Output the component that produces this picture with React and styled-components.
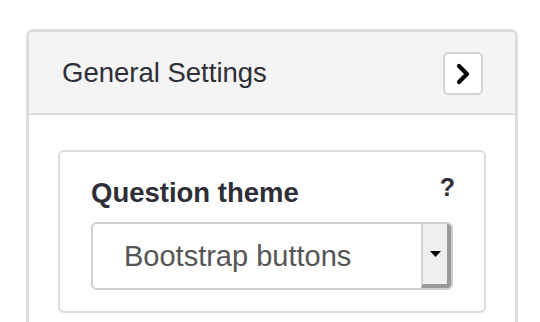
import React from "react";
import styled, { createGlobalStyle } from "styled-components";

const GlobalStyle = createGlobalStyle`
  body {
    margin: 0;
    background: #fff;
    font-family: "Liberation Sans", Arial, sans-serif;
  }
`;

const Page = styled.div`
  padding: 29px 22px 0 26px;
`;

const Panel = styled.div`
  width: 492px;
  box-sizing: border-box;
  border: 3px solid #ddd;
  border-bottom: none;
  border-radius: 7px 7px 0 0;
  overflow: hidden;
`;

const Header = styled.div`
  display: flex;
  align-items: center;
  justify-content: space-between;
  height: 81px;
  padding: 0 32px 0 33px;
  background: #f4f4f4;
  border-bottom: 2px solid #ddd;
`;

const HeaderTitle = styled.span`
  font-size: 27.5px;
  line-height: 32px;
  color: #2e2e36;
`;

const ToggleButton = styled.button`
  width: 40px;
  height: 43px;
  margin-top: 2px;
  padding: 0;
  display: flex;
  align-items: center;
  justify-content: center;
  background: #fff;
  border: 2px solid #d4d4d4;
  border-radius: 5px;
`;

const Body = styled.div`
  padding: 35px 29px 20px;
  background: #fff;
`;

const Card = styled.div`
  border: 2px solid #ddd;
  border-radius: 6px;
  padding: 25px 31px 21px;
`;

const LabelRow = styled.div`
  display: flex;
  justify-content: space-between;
  align-items: flex-start;
`;

const Label = styled.span`
  font-size: 27.5px;
  line-height: 32px;
  font-weight: 700;
  color: #2e2e36;
`;

const Help = styled.span`
  font-size: 25px;
  line-height: 32px;
  font-weight: 700;
  color: #2e2e36;
  margin-top: -6px;
  margin-right: -2px;
`;

const Select = styled.div`
  margin-top: 13px;
  width: 362px;
  height: 68px;
  box-sizing: border-box;
  display: flex;
  border: 2px solid #cfcfcf;
  border-radius: 6px;
  overflow: hidden;
`;

const SelectValue = styled.span`
  flex: 1;
  display: flex;
  align-items: center;
  padding-left: 31px;
  font-size: 29px;
  color: #555;
`;

const Arrow = styled.span`
  width: 30px;
  display: flex;
  align-items: center;
  justify-content: center;
  background: #efefef;
  border-left: 2px solid #d4d4d4;
  border-right: 4px solid #999;
  border-bottom: 4px solid #999;
  box-sizing: border-box;
`;

export default function App() {
  return (
    <>
      <GlobalStyle />
      <Page>
        <Panel>
          <Header>
            <HeaderTitle>General Settings</HeaderTitle>
            <ToggleButton>
              <svg width="16" height="22" viewBox="0 0 16 22">
                <path d="M4 3 L12 11 L4 19" fill="none" stroke="#000" strokeWidth="4.2" strokeLinecap="round" strokeLinejoin="round" />
              </svg>
            </ToggleButton>
          </Header>
          <Body>
            <Card>
              <LabelRow>
                <Label>Question theme</Label>
                <Help>?</Help>
              </LabelRow>
              <Select>
                <SelectValue>Bootstrap buttons</SelectValue>
                <Arrow>
                  <svg width="11" height="6" viewBox="0 0 11 6">
                    <path d="M0 0 H11 L5.5 6 Z" fill="#000" />
                  </svg>
                </Arrow>
              </Select>
            </Card>
          </Body>
        </Panel>
      </Page>
    </>
  );
}
